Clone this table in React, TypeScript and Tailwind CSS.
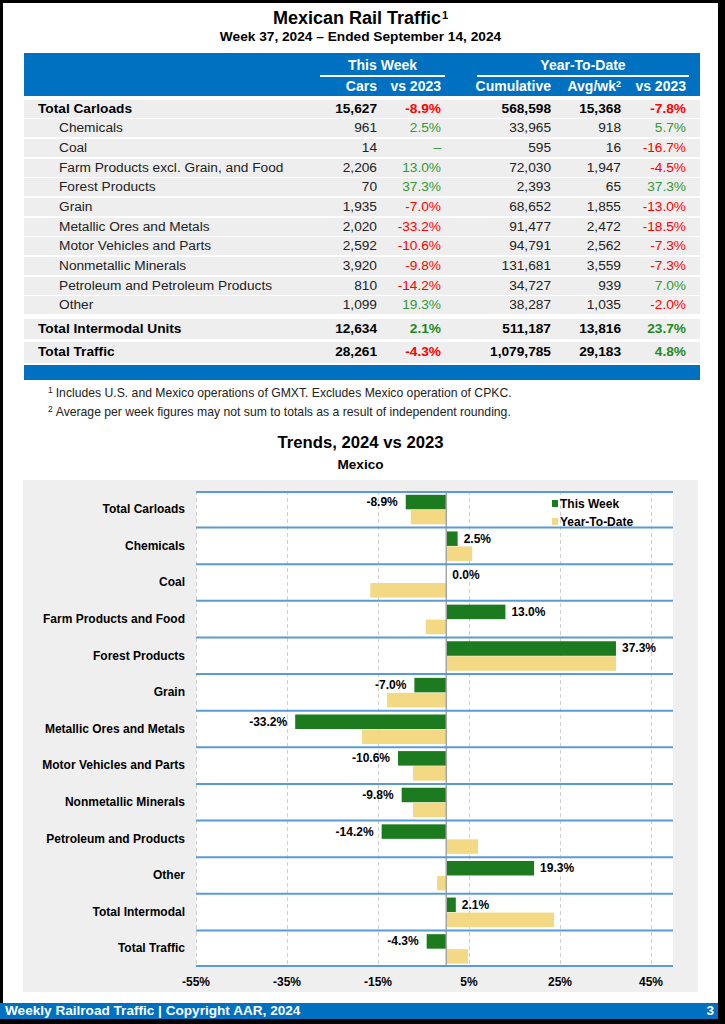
import React from "react";

type Row = {
  label: string;
  bold?: boolean;
  cars: string;
  vs: string;
  cum: string;
  avg: string;
  ytd: string;
};

const rows: Row[] = [
  { label: "Total Carloads", bold: true, cars: "15,627", vs: "-8.9%", cum: "568,598", avg: "15,368", ytd: "-7.8%" },
  { label: "Chemicals", cars: "961", vs: "2.5%", cum: "33,965", avg: "918", ytd: "5.7%" },
  { label: "Coal", cars: "14", vs: "–", cum: "595", avg: "16", ytd: "-16.7%" },
  { label: "Farm Products excl. Grain, and Food", cars: "2,206", vs: "13.0%", cum: "72,030", avg: "1,947", ytd: "-4.5%" },
  { label: "Forest Products", cars: "70", vs: "37.3%", cum: "2,393", avg: "65", ytd: "37.3%" },
  { label: "Grain", cars: "1,935", vs: "-7.0%", cum: "68,652", avg: "1,855", ytd: "-13.0%" },
  { label: "Metallic Ores and Metals", cars: "2,020", vs: "-33.2%", cum: "91,477", avg: "2,472", ytd: "-18.5%" },
  { label: "Motor Vehicles and Parts", cars: "2,592", vs: "-10.6%", cum: "94,791", avg: "2,562", ytd: "-7.3%" },
  { label: "Nonmetallic Minerals", cars: "3,920", vs: "-9.8%", cum: "131,681", avg: "3,559", ytd: "-7.3%" },
  { label: "Petroleum and Petroleum Products", cars: "810", vs: "-14.2%", cum: "34,727", avg: "939", ytd: "7.0%" },
  { label: "Other", cars: "1,099", vs: "19.3%", cum: "38,287", avg: "1,035", ytd: "-2.0%" },
];

const intermodal: Row = { label: "Total Intermodal Units", bold: true, cars: "12,634", vs: "2.1%", cum: "511,187", avg: "13,816", ytd: "23.7%" };
const traffic: Row = { label: "Total Traffic", bold: true, cars: "28,261", vs: "-4.3%", cum: "1,079,785", avg: "29,183", ytd: "4.8%" };

const cats: [string, number, number][] = [
  ["Total Carloads", -8.9, -7.8],
  ["Chemicals", 2.5, 5.7],
  ["Coal", 0.0, -16.7],
  ["Farm Products and Food", 13.0, -4.5],
  ["Forest Products", 37.3, 37.3],
  ["Grain", -7.0, -13.0],
  ["Metallic Ores and Metals", -33.2, -18.5],
  ["Motor Vehicles and Parts", -10.6, -7.3],
  ["Nonmetallic Minerals", -9.8, -7.3],
  ["Petroleum and Products", -14.2, 7.0],
  ["Other", 19.3, -2.0],
  ["Total Intermodal", 2.1, 23.7],
  ["Total Traffic", -4.3, 4.8],
];

function pctClass(v: string, bold?: boolean) {
  if (v.startsWith("-")) return "text-[#ff0000]";
  return bold ? "text-[#1f8a1f]" : "text-[#339933]";
}

function DataRow({ r, h }: { r: Row; h: string }) {
  return (
    <div className={`flex items-center bg-[#eeeeee] ${h} ${r.bold ? "font-bold text-black" : "text-[#222222]"}`}>
      <div className={`w-[293px] ${r.bold ? "pl-[14px]" : "pl-[35px]"}`}>{r.label}</div>
      <div className="w-[60px] text-right">{r.cars}</div>
      <div className={`w-[64px] text-right ${pctClass(r.vs, r.bold)}`}>{r.vs}</div>
      <div className="w-[110px] text-right">{r.cum}</div>
      <div className="w-[70px] text-right">{r.avg}</div>
      <div className={`w-[65px] text-right ${pctClass(r.ytd, r.bold)}`}>{r.ytd}</div>
    </div>
  );
}

const PW = 477;
const PH = 476;
const BAND = PH / 13;
const ZERO = 250.25;
const K = 4.55;

function Chart() {
  const grid = [0, 91, 182, 273, 364, 455];
  return (
    <svg width={PW} height={PH} viewBox={`0 0 ${PW} ${PH}`} className="block">
      <rect x={0} y={0} width={PW} height={PH} fill="#ffffff" />
      {grid.map((g) => (
        <line key={g} x1={g + 0.5} x2={g + 0.5} y1={0} y2={PH} stroke="#cfcfcf" strokeWidth={1} strokeDasharray="4 3" />
      ))}
      {cats.map(([name, tw, ytd], i) => {
        const t = i * BAND;
        const twX = Math.min(ZERO, ZERO + tw * K);
        const ytdX = Math.min(ZERO, ZERO + ytd * K);
        return (
          <g key={name}>
            <rect x={twX} y={t + 3.8} width={Math.abs(tw * K)} height={14.5} fill="#1c7a1f" />
            <rect x={ytdX} y={t + 18.8} width={Math.abs(ytd * K)} height={14.5} fill="#f3d983" />
          </g>
        );
      })}
      <line x1={ZERO} x2={ZERO} y1={0} y2={PH} stroke="#a6a6a6" strokeWidth={1.5} />
      {Array.from({ length: 14 }).map((_, i) => {
        const y = Math.min(Math.max(i * BAND, 1), PH - 1);
        return <line key={i} x1={0} x2={PW} y1={y} y2={y} stroke="#5b9bd5" strokeWidth={2} />;
      })}
      {cats.map(([name, tw], i) => {
        const t = i * BAND;
        const end = ZERO + tw * K;
        const neg = tw < 0;
        return (
          <text
            key={name + "l"}
            x={neg ? end - 8 : end + 6}
            y={t + 11}
            textAnchor={neg ? "end" : "start"}
            dominantBaseline="central"
            className="text-[12px] font-bold"
            fill="#000"
          >
            {tw.toFixed(1)}%
          </text>
        );
      })}
      <rect x={356} y={9} width={6} height={7} fill="#1c7a1f" />
      <text x={364} y={12.5} dominantBaseline="central" className="text-[12px] font-bold" fill="#000">
        This Week
      </text>
      <rect x={356} y={27} width={6} height={7} fill="#f3d983" />
      <text x={364} y={30.5} dominantBaseline="central" className="text-[12px] font-bold" fill="#000">
        Year-To-Date
      </text>
    </svg>
  );
}

export default function App() {
  return (
    <div className="w-[725px] h-[1024px] bg-black flex flex-col pt-[3px] pb-[5px] font-['Liberation_Sans',Arial,sans-serif]">
      <div className="ml-[3px] mr-[7px] flex-1 bg-white flex flex-col">
        <div className="mt-[4px] text-center text-[18px] leading-[22px] font-bold text-black">
          Mexican Rail Traffic<sup className="text-[11px] top-[-0.42em] ml-[1px]">1</sup>
        </div>
        <div className="text-center text-[13.7px] leading-[16px] font-bold text-black">
          Week 37, 2024 – Ended September 14, 2024
        </div>

        {/* Table */}
        <div className="mt-[8px] ml-[21px] w-[676px] text-[13.7px] leading-[16px]">
          <div className="h-[43px] bg-[#0070c0] text-white font-bold text-[14px] pt-[3px] flex flex-col">
            <div className="flex h-[18px] leading-[18px]">
              <div className="ml-[296px] w-[125px] text-center">This Week</div>
              <div className="ml-[32px] w-[212px] text-center">Year-To-Date</div>
            </div>
            <div className="flex h-[3px] items-end">
              <div className="ml-[296px] w-[125px] h-[2px] bg-white" />
              <div className="ml-[32px] w-[212px] h-[2px] bg-white" />
            </div>
            <div className="flex h-[18px] leading-[18px]">
              <div className="w-[293px]" />
              <div className="w-[60px] text-right">Cars</div>
              <div className="w-[64px] text-right">vs 2023</div>
              <div className="w-[110px] text-right">Cumulative</div>
              <div className="w-[70px] text-right">
                Avg/wk<sup className="text-[9px]">2</sup>
              </div>
              <div className="w-[65px] text-right">vs 2023</div>
            </div>
          </div>
          <div className="mt-[3.5px] flex flex-col gap-[1.7px]">
            {rows.map((r) => (
              <DataRow key={r.label} r={r} h="h-[18px]" />
            ))}
          </div>
          <div className="mt-[4.5px]">
            <DataRow r={intermodal} h="h-[20px]" />
          </div>
          <div className="mt-[3px]">
            <DataRow r={traffic} h="h-[21px]" />
          </div>
          <div className="mt-[2px] h-[15px] bg-[#0070c0]" />
        </div>

        {/* Footnotes */}
        <div className="mt-[4.5px] ml-[45px] text-[12.2px] leading-[19px] text-[#222222]">
          <div>
            <sup className="text-[8.5px] mr-[3px]">1</sup>Includes U.S. and Mexico operations of GMXT. Excludes Mexico operation of CPKC.
          </div>
          <div>
            <sup className="text-[8.5px] mr-[3px]">2</sup>Average per week figures may not sum to totals as a result of independent rounding.
          </div>
        </div>

        {/* Chart titles */}
        <div className="mt-[9.5px] text-center text-[16.7px] leading-[22px] font-bold text-black">Trends, 2024 vs 2023</div>
        <div className="mt-[2px] text-center text-[13.6px] leading-[18px] font-bold text-black">Mexico</div>

        {/* Chart */}
        <div className="mt-[6px] ml-[20px] w-[675px] h-[512px] bg-[#efefef] pt-[11px] flex flex-col">
          <div className="flex">
            <div className="w-[173px] flex flex-col">
              {cats.map(([name]) => (
                <div key={name} className="h-[36.615px] flex items-center justify-end pr-[11px] text-[12px] font-bold text-black">
                  {name}
                </div>
              ))}
            </div>
            <Chart />
          </div>
          <div className="mt-[7px] flex pl-[127.5px] text-[12px] leading-[16px] font-bold text-black">
            {["-55%", "-35%", "-15%", "5%", "25%", "45%"].map((l) => (
              <div key={l} className="w-[91px] text-center">
                {l}
              </div>
            ))}
          </div>
        </div>
      </div>
      <div className="mr-[7px] h-[16px] bg-[#0070c0] flex items-center justify-between pl-[5px] pr-[4px] text-white font-bold text-[13.6px] leading-[16px]">
        <span>Weekly Railroad Traffic | Copyright AAR, 2024</span>
        <span>3</span>
      </div>
    </div>
  );
}
